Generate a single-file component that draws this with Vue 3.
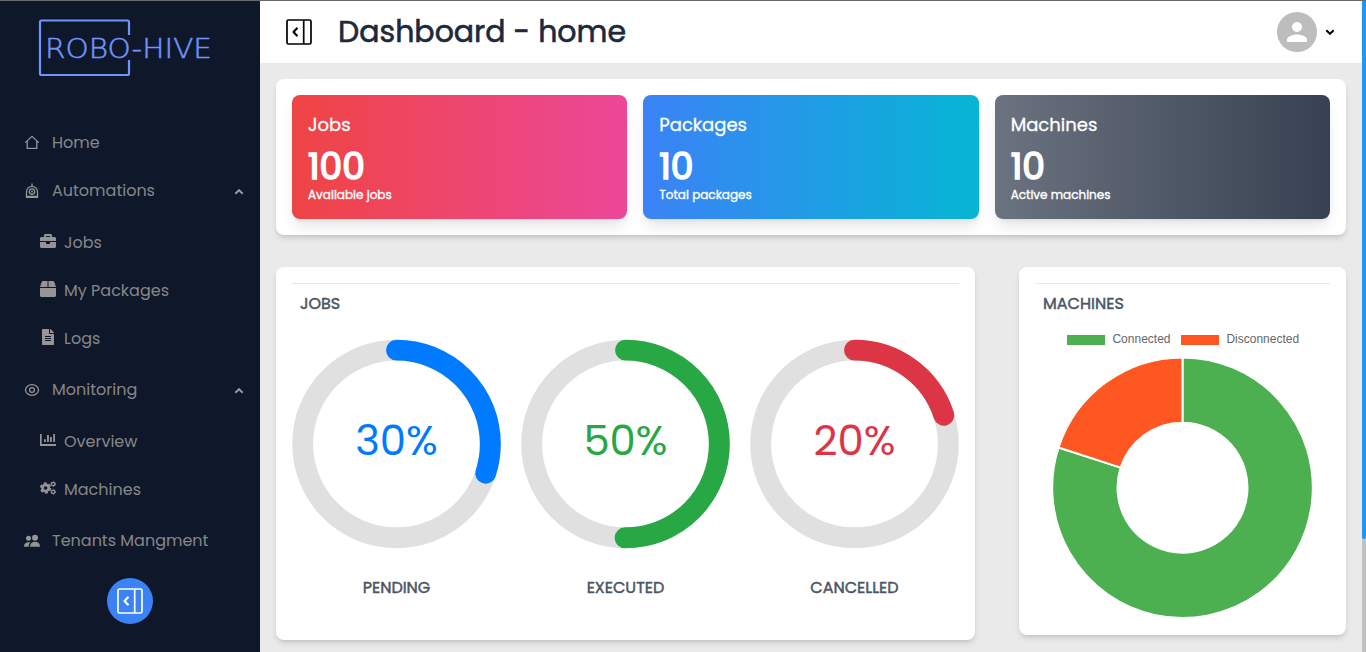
<script setup>
const stats = [
  { key: 'jobs', title: 'Jobs', value: 100, note: 'Available jobs' },
  { key: 'packages', title: 'Packages', value: 10, note: 'Total packages' },
  { key: 'machines', title: 'Machines', value: 10, note: 'Active machines' },
]

const rings = [
  { label: 'PENDING', key: 'pending', percent: 30, color: '#007bff' },
  { label: 'EXECUTED', key: 'executed', percent: 50, color: '#28a745' },
  { label: 'CANCELLED', key: 'cancelled', percent: 20, color: '#dc3545' },
]

const arcLength = 2 * Math.PI * 44.9
</script>

<template>
  <div class="app">
    <aside class="sidebar">
      <svg class="logo" width="180" height="64" viewBox="0 0 180 64">
        <path d="M95 19V6q0-1.500-1.500-1.500H7.500q-1.500 0-1.500 1.500v51.500q0 1.500 1.500 1.500h86q1.500 0 1.500-1.500V44" />
        <text x="11" y="42" textLength="167" lengthAdjust="spacingAndGlyphs">ROBO-HIVE</text>
      </svg>

      <nav class="menu">
        <a class="item">
          <svg class="icon line" viewBox="0 0 16 16"><path d="M1.300 8.600 8 2.300l6.700 6.300M3.200 7.200v7.200h9.600V7.200" /></svg>
          <span>Home</span>
        </a>
        <a class="item">
          <svg class="icon line" viewBox="0 0 16 16"><path d="M8 1.500v3M2.500 15.300V9.800a5.500 5.500 0 0 1 11 0v5.500zM2.500 14.500h11" /><circle cx="8" cy="9.600" r="2.700" /><circle cx="8" cy="9.600" r=".4" /></svg>
          <span>Automations</span>
          <svg class="caret" viewBox="0 0 10 6"><path d="m1.300 4.800 3.700-3.600 3.700 3.600" /></svg>
        </a>
        <div class="sub">
          <a class="item">
            <svg class="icon solid" viewBox="0 0 512 512"><path d="M320 336c0 8.800-7.200 16-16 16h-96c-8.800 0-16-7.200-16-16v-48H0v144c0 25.600 22.400 48 48 48h416c25.600 0 48-22.400 48-48V288H320zm144-208h-80V80c0-25.600-22.400-48-48-48H176c-25.600 0-48 22.400-48 48v48H48c-25.600 0-48 22.400-48 48v80h512v-80c0-25.600-22.400-48-48-48m-144 0H192V96h128z" /></svg>
            <span>Jobs</span>
          </a>
          <a class="item">
            <svg class="icon solid" viewBox="0 0 512 512"><path d="M509.500 184.600 458.900 32.800A48 48 0 0 0 413.400 0H272v192h238.700zM240 0H98.600a48 48 0 0 0-45.500 32.800L2.500 184.600 1.300 192H240zM0 224v240c0 26.500 21.500 48 48 48h416c26.500 0 48-21.500 48-48V224z" /></svg>
            <span>My Packages</span>
          </a>
          <a class="item">
            <svg class="icon solid" viewBox="-64 0 512 512"><path fill-rule="evenodd" d="M224 136V0H24C10.700 0 0 10.700 0 24v464c0 13.300 10.700 24 24 24h336c13.300 0 24-10.700 24-24V160H248c-13.200 0-24-10.800-24-24M96 224h192v32H96zm0 64h192v32H96zm0 64h192v32H96zM384 121.900v6.100H256V0h6.100c6.400 0 12.500 2.500 17 7l97.900 98c4.500 4.500 7 10.600 7 16.900" /></svg>
            <span>Logs</span>
          </a>
        </div>
        <a class="item">
          <svg class="icon line" viewBox="0 0 16 16"><ellipse cx="8" cy="9" rx="6.500" ry="5.400" /><circle cx="8" cy="9" r="2.400" /></svg>
          <span>Monitoring</span>
          <svg class="caret" viewBox="0 0 10 6"><path d="m1.300 4.800 3.700-3.600 3.700 3.600" /></svg>
        </a>
        <div class="sub">
          <a class="item">
            <svg class="icon solid" viewBox="0 0 16 16"><path d="M0 2h1.700v10H16v2H0zM4 7.300h1.800V10H4zM7 3h1.900v7H7zm3 2h1.800v5H10zm3.200-3H15v8h-1.800z" /></svg>
            <span>Overview</span>
          </a>
          <a class="item">
            <svg class="icon gears" viewBox="0 0 16 16">
              <circle cx="5.600" cy="8" r="3.100" stroke-width="2.600" /><circle cx="5.600" cy="8" r="4.700" stroke-width="1.900" stroke-dasharray="2.900 2.020" />
              <circle cx="13.200" cy="4" r="1.700" stroke-width="1.300" /><circle cx="13.200" cy="4" r="2.400" stroke-width=".8" stroke-dasharray="1.250 1.250" />
              <circle cx="13.200" cy="11.800" r="1.700" stroke-width="1.300" /><circle cx="13.200" cy="11.800" r="2.400" stroke-width=".8" stroke-dasharray="1.250 1.250" />
            </svg>
            <span>Machines</span>
          </a>
        </div>
        <a class="item">
          <svg class="icon solid" viewBox="0 0 16 16"><circle cx="4.500" cy="6.200" r="2.500" /><circle cx="11" cy="5.800" r="3" /><path d="M0 14.700c0-3 1.600-4.500 4.500-4.500.8 0 1.500.1 2 .4-1.500 1.100-1.800 2.400-1.800 4.100zM6 14.700c0-3.300 2-5 5-5s5 1.700 5 5z" /></svg>
          <span>Tenants Mangment</span>
        </a>
      </nav>

      <button class="collapse">
        <svg class="panel-icon" viewBox="0 0 26 26"><rect x="1" y="1" width="24" height="24" rx="1.500" /><path d="M17.700 1v24" /><path class="chev" d="M11.500 8.800 7.500 13l4 4.200" /></svg>
      </button>
    </aside>

    <main class="main">
      <header class="topbar">
        <svg class="panel-icon" viewBox="0 0 26 26"><rect x="1" y="1" width="24" height="24" rx="1.500" /><path d="M17.700 1v24" /><path class="chev" d="M11.500 8.800 7.500 13l4 4.200" /></svg>
        <h1>Dashboard - home</h1>
        <div class="user">
          <svg class="avatar" viewBox="0 0 40 40"><circle cx="20" cy="20" r="20" fill="#bdbdbd" /><circle cx="20" cy="15" r="5" fill="#fff" /><path d="M10 30v-2.500c0-3.300 6.700-5 10-5s10 1.700 10 5V30z" fill="#fff" /></svg>
          <svg class="caret" viewBox="0 0 10 6"><path d="m1.300 1.200 3.700 3.600 3.700-3.600" /></svg>
        </div>
      </header>

      <div class="content">
        <section class="panel stats">
          <article v-for="s in stats" :key="s.key" class="stat" :class="s.key">
            <h2>{{ s.title }}</h2>
            <strong>{{ s.value }}</strong>
            <p>{{ s.note }}</p>
          </article>
        </section>

        <div class="row">
          <section class="panel jobs-panel">
            <h3 class="heading">JOBS</h3>
            <div class="rings">
              <figure v-for="r in rings" :key="r.key">
                <svg viewBox="0 0 100 100">
                  <circle cx="50" cy="49.750" r="44.900" class="track" />
                  <circle cx="50" cy="49.750" r="44.900" class="arc" :stroke="r.color" :stroke-dasharray="`${arcLength * r.percent / 100} ${arcLength}`" transform="rotate(-90 50 49.750)" />
                  <text x="50" y="55.200" text-anchor="middle" :fill="r.color">{{ r.percent }}%</text>
                </svg>
                <figcaption>{{ r.label }}</figcaption>
              </figure>
            </div>
          </section>

          <section class="panel machines-panel">
            <h3 class="heading">MACHINES</h3>
            <div class="legend">
              <span class="key on">Connected</span>
              <span class="key off">Disconnected</span>
            </div>
            <svg class="donut" viewBox="-129.500 -129.700 260 260">
              <path fill="#4caf50" d="M0-130.300A130.300 130.300 0 1 1-123.920-40.260L-61.820-20.090A65 65 0 1 0 0-65z" />
              <path fill="#ff5722" d="M-123.920-40.260A130.300 130.300 0 0 1 0-130.300V-65A65 65 0 0 0-61.820-20.090z" />
            </svg>
          </section>
        </div>
      </div>
    </main>
    <div class="scrollbar"><i></i></div>
  </div>
</template>

<style>
body { background: #eaeaea; overflow: hidden; }
</style>

<style scoped>
* { box-sizing: border-box; }
.app { display: flex; width: 1366px; height: 652px; overflow: hidden; border-top: 1px solid #686868; background: #eaeaea; font-family: Poppins, Inter, "Noto Sans", sans-serif; }
h1, h2, h3, p, figure { margin: 0; }
span, h1, h2, h3, p, strong, figcaption { white-space: nowrap; }

.sidebar { width: 260px; flex: none; background: #0f172a; display: flex; flex-direction: column; align-items: center; padding-top: 15px; }
.logo { display: block; margin-right: 12px; }
.logo path { fill: none; stroke: #7094fb; stroke-width: 2.200; }
.logo text { fill: #7094fb; stroke: #7094fb; stroke-width: .5; font-family: "DejaVu Sans", sans-serif; font-size: 27px; font-weight: 200; }
.menu { width: 260px; margin-top: 38px; }
.item { height: 48px; display: flex; align-items: center; padding: 0 16px 0 24px; color: #878787; font-size: 16px; }
.icon { width: 16px; height: 16px; flex: none; margin-right: 12px; overflow: visible; }
.solid { fill: #959595; }
.line { fill: none; stroke: #959595; stroke-width: 1.300; }
.gears { fill: none; stroke: #959595; }
.caret { width: 10px; height: 6px; margin-left: auto; fill: none; stroke: #999; stroke-width: 2; }
.menu .caret { margin-top: 3px; }
.sub { margin: 4px 0 3px; }
.sub .item { padding-left: 40px; }
.sub .icon { margin-right: 8px; margin-top: -3px; }
.collapse { width: 46px; height: 46px; border: 0; padding: 0; margin-top: 14px; border-radius: 50%; background: #3b82f6; display: flex; align-items: center; justify-content: center; }
.panel-icon { width: 26px; height: 26px; flex: none; fill: none; stroke: #000; stroke-width: 1.700; stroke-linejoin: round; }
.panel-icon .chev { stroke-width: 2.100; }
.collapse .panel-icon { stroke: #fff; }

.main { width: 1102px; flex: none; }
.topbar { height: 62px; background: #fff; display: flex; align-items: center; padding: 0 27px 0 26px; }
h1 { font-size: 30px; font-weight: 400; line-height: 40px; margin-left: 26px; color: #1e293b; -webkit-text-stroke: .6px currentColor; }
.user { margin-left: auto; display: flex; align-items: center; gap: 8px; }
.avatar { width: 40px; height: 40px; }
.user .caret { stroke: #000; }
.content { padding: 16px; }
.panel { background: #fff; border-radius: 8px; box-shadow: 0 4px 6px -1px rgba(0, 0, 0, .12), 0 2px 4px -2px rgba(0, 0, 0, .12); }
.stats { height: 156px; padding: 16px; display: grid; grid-template-columns: repeat(3, 1fr); gap: 16px; }
.stat { border-radius: 8px; color: #fff; padding: 16px; box-shadow: 0 10px 15px -3px rgba(0, 0, 0, .1), 0 4px 6px -4px rgba(0, 0, 0, .1); }
.stat.jobs { background: linear-gradient(90deg, #ef4444, #ec4899); }
.stat.packages { background: linear-gradient(90deg, #3b82f6, #06b6d4); }
.stat.machines { background: linear-gradient(90deg, #6b7280, #374151); }
h2 { font-size: 18px; font-weight: 400; line-height: 28px; -webkit-text-stroke: .3px currentColor; }
strong { display: block; font-size: 36px; font-weight: 400; line-height: 40px; margin-top: 8px; -webkit-text-stroke: 1.700px currentColor; }
.stat p { font-size: 12px; font-weight: 400; line-height: 16px; -webkit-text-stroke: .35px currentColor; }
.row { display: flex; align-items: flex-start; justify-content: space-between; margin-top: 32px; }
.jobs-panel { width: 699px; height: 373px; padding: 16px; }
.machines-panel { width: 327px; height: 368px; padding: 16px; }
.heading { border-top: 1px solid #e5e7eb; padding: 8px; font-size: 16px; line-height: 24px; font-weight: 400; color: #4b5563; -webkit-text-stroke: .45px currentColor; }
.rings { display: flex; justify-content: space-between; margin-top: 16px; }
.rings figure { width: 209px; text-align: center; }
.rings svg { display: block; width: 209px; height: 209px; overflow: visible; }
.track { fill: none; stroke: #e0e0e0; stroke-width: 10; }
.arc { fill: none; stroke-width: 10; stroke-linecap: round; }
.rings text { font-size: 20px; font-weight: 400; }
figcaption { margin-top: 27px; font-size: 16px; line-height: 24px; font-weight: 400; color: #4b5563; -webkit-text-stroke: .45px currentColor; }
.legend { display: flex; justify-content: center; gap: 10.500px; margin-top: 8px; padding-left: 1.200px; height: 14px; font: 12px/14px "Liberation Sans", sans-serif; color: #666; }
.key { display: flex; align-items: center; }
.key::before { content: ""; width: 38px; height: 10px; margin: 2px 7.400px 0 0; background: #4caf50; }
.key.off::before { background: #ff5722; }
.donut { display: block; width: 260px; height: 260px; margin: 12px auto 0; overflow: visible; }
.donut path { stroke: #fff; stroke-width: 2; stroke-linejoin: round; }
.scrollbar { width: 4px; height: 652px; background: #c1c1c1; }
.scrollbar i { display: block; height: 538px; background: #2196f3; border-radius: 0 0 2px 2px; }
</style>
